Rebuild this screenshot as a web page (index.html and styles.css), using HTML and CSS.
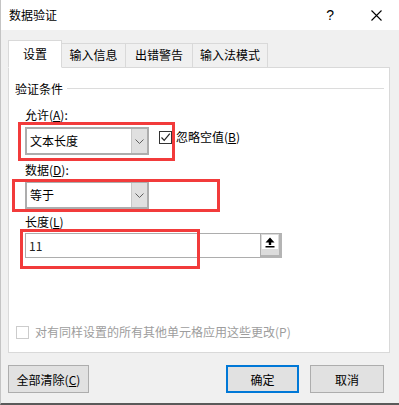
FILE: index.html
```html
<!DOCTYPE html>
<html lang="zh-CN">
  <head>
    <meta charset="UTF-8" />
    <title>数据验证</title>
    <link rel="stylesheet" href="styles.css">
  </head>
  <body>
    <div class="window">
      <!-- Title bar -->
      <div class="titlebar">
        <span class="title">数据验证</span>
        <span class="help">?</span>
        <svg class="close" width="11" height="11" viewBox="0 0 11 11">
          <path d="M0.5 0.5 L10.5 10.5 M10.5 0.5 L0.5 10.5" stroke="#000" stroke-width="1.1" fill="none" />
        </svg>
      </div>

      <div class="content">
        <!-- Tabs -->
        <div class="tabs">
          <div class="tab active">设置</div>
          <div class="tab tab-info">输入信息</div>
          <div class="tab tab-error">出错警告</div>
          <div class="tab tab-ime">输入法模式</div>
        </div>

        <div class="panel">
          <div class="group-title">
            <span>验证条件</span>
            <i class="rule"></i>
          </div>

          <div class="fields">
            <div class="field-label label-allow">允许(<u>A</u>):</div>
            <div class="row">
              <div class="combo">
                <span class="combo-text">文本长度</span>
                <span class="combo-btn">
                  <svg width="9" height="5" viewBox="0 0 9 5"><path d="M0.5 0.5 L4.5 4.5 L8.5 0.5" stroke="#606060" fill="none" /></svg>
                </span>
              </div>
              <label class="check">
                <span class="box">
                  <svg width="11" height="11" viewBox="0 0 11 11"><path d="M1.5 5.5 L4.2 8.3 L9.8 1.6" stroke="#222" stroke-width="1.2" fill="none" /></svg>
                </span>
                忽略空值(<u>B</u>)
              </label>
            </div>

            <div class="field-label label-data">数据(<u>D</u>):</div>
            <div class="combo">
              <span class="combo-text">等于</span>
              <span class="combo-btn">
                <svg width="9" height="5" viewBox="0 0 9 5"><path d="M0.5 0.5 L4.5 4.5 L8.5 0.5" stroke="#606060" fill="none" /></svg>
              </span>
            </div>

            <div class="field-label label-length">长度(<u>L</u>)</div>
            <div class="textbox">
              <span class="textbox-text">11</span>
              <span class="pick-btn">
                <span class="pick-face">
                  <svg width="10" height="11" viewBox="0 0 10 11">
                    <path d="M5 0.5 L9.5 5.5 L6.2 5.5 L6.2 8 L3.8 8 L3.8 5.5 L0.5 5.5 Z" fill="#000" />
                    <rect x="0.5" y="9" width="9" height="1.5" fill="#000" />
                  </svg>
                </span>
              </span>
            </div>
          </div>

          <label class="check apply-all">
            <span class="box disabled"></span>
            对有同样设置的所有其他单元格应用这些更改(P)
          </label>

          <!-- red annotation boxes -->
          <div class="mark mark-allow"></div>
          <div class="mark mark-data"></div>
          <div class="mark mark-length"></div>
        </div>

        <div class="footer">
          <button class="btn">全部清除(<u>C</u>)</button>
          <div class="footer-right">
            <button class="btn btn-default">确定</button>
            <button class="btn">取消</button>
          </div>
        </div>
      </div>
    </div>
  </body>
</html>
```

FILE: styles.css
```css
* {
  box-sizing: border-box;
}
body {
  margin: 0;
  font-family: "Noto Sans CJK SC", "Noto Sans", sans-serif;
  font-size: 12px;
  color: #000;
  background: #fff;
}
u {
  text-decoration: underline;
  text-underline-offset: 1px;
}
.window {
  width: 399px;
  height: 405px;
  background: #f0f0f0;
  border-left: 1px solid #c4c4c4;
  border-bottom: 2px solid #5a5a5a;
}
.titlebar {
  height: 30px;
  background: #fff;
  display: flex;
  align-items: center;
  padding-left: 8px;
}
.title {
  flex: 1;
  line-height: 16px;
}
.help {
  font-family: "Liberation Sans", sans-serif;
  font-size: 14px;
  margin-right: 37px;
}
.close {
  margin-right: 17px;
}
.content {
  padding: 10px 8px 0 7px;
}
.tabs {
  display: flex;
  align-items: flex-end;
  height: 28px;
  position: relative;
  z-index: 1;
  margin-bottom: -1px;
}
.tab {
  height: 25px;
  line-height: 22px;
  text-align: center;
  border: 1px solid #d9d9d9;
  border-left: none;
  background: #f0f0f0;
}
.tab-info {
  width: 64px;
}
.tab-error {
  width: 67px;
}
.tab-ime {
  width: 75px;
}
.tab.active {
  height: 28px;
  width: 54px;
  border-left: 1px solid #d9d9d9;
  background: #fff;
  border-bottom-color: #fff;
  line-height: 25px;
}
.panel {
  position: relative;
  width: 382px;
  height: 286px;
  background: #fff;
  border: 1px solid #d9d9d9;
}
.group-title {
  display: flex;
  align-items: center;
  gap: 4px;
  height: 16px;
  margin-top: 13px;
  padding: 0 5px 0 6px;
  line-height: 16px;
}
.rule {
  flex: 1;
  height: 1px;
  background: #dcdcdc;
  margin-top: -1px;
}
.fields {
  padding-left: 16px;
}
.field-label {
  line-height: 16px;
  height: 16px;
  margin-bottom: 3px;
}
.label-allow {
  margin-top: 10px;
  margin-bottom: 4px;
}
.label-data {
  margin-top: 7px;
}
.label-length {
  margin-top: 5px;
}
.row {
  display: flex;
  align-items: flex-start;
  gap: 10px;
}
.combo {
  display: flex;
  width: 124px;
  height: 28px;
  border: 2px solid #adadad;
  background: #fff;
}
.combo-text {
  flex: 1;
  padding-left: 3px;
  line-height: 24px;
}
.combo-btn {
  width: 16px;
  background: #e0e0e0;
  border-left: 1px solid #c8c8c8;
  display: flex;
  align-items: center;
  justify-content: center;
}
.check {
  display: flex;
  align-items: center;
  line-height: 16px;
}
.row .check {
  margin-top: 2px;
}
.box {
  width: 13px;
  height: 13px;
  border: 1px solid #333;
  background: #fff;
  margin-right: 4px;
  display: flex;
  align-items: center;
  justify-content: center;
}
.box.disabled {
  border-color: #cccccc;
  margin-right: 6px;
}
.textbox {
  display: flex;
  width: 257px;
  height: 25px;
  border: 1px solid #adadad;
  background: #fff;
}
.textbox-text {
  flex: 1;
  padding-left: 3px;
  line-height: 23px;
  color: #222;
}
.pick-btn {
  width: 22px;
  margin: -1px -1px -1px 0;
  background: #dcdcdc;
  border: 1px solid #adadad;
  border-right-width: 3px;
  border-bottom-width: 3px;
  border-right-color: #b4b4b4;
  border-bottom-color: #b4b4b4;
  padding: 1px 0 0 1px;
}
.pick-face {
  display: flex;
  align-items: center;
  justify-content: center;
  width: 16px;
  height: 14px;
  background: #fff;
}
.apply-all {
  margin-top: 66px;
  padding-left: 7px;
  color: #9d9d9d;
}
.mark {
  position: absolute;
  border: 3px solid #f23b3b;
}
.mark-allow {
  left: 9px;
  top: 54px;
  width: 157px;
  height: 39px;
}
.mark-data {
  left: 3px;
  top: 111px;
  width: 208px;
  height: 33px;
}
.mark-length {
  left: 11px;
  top: 161px;
  width: 180px;
  height: 40px;
}
.footer {
  display: flex;
  justify-content: space-between;
  padding-top: 12px;
}
.footer-right {
  display: flex;
  gap: 11px;
  margin-right: 7px;
}
.btn {
  font-family: inherit;
  font-size: 12px;
  height: 28px;
  padding: 0;
  background: #e1e1e1;
  border: 1px solid #adadad;
  color: #000;
  width: 74px;
}
.footer > .btn {
  width: 81px;
}
.btn-default {
  width: 73px;
  border: 2px solid #0078d7;
}
```
